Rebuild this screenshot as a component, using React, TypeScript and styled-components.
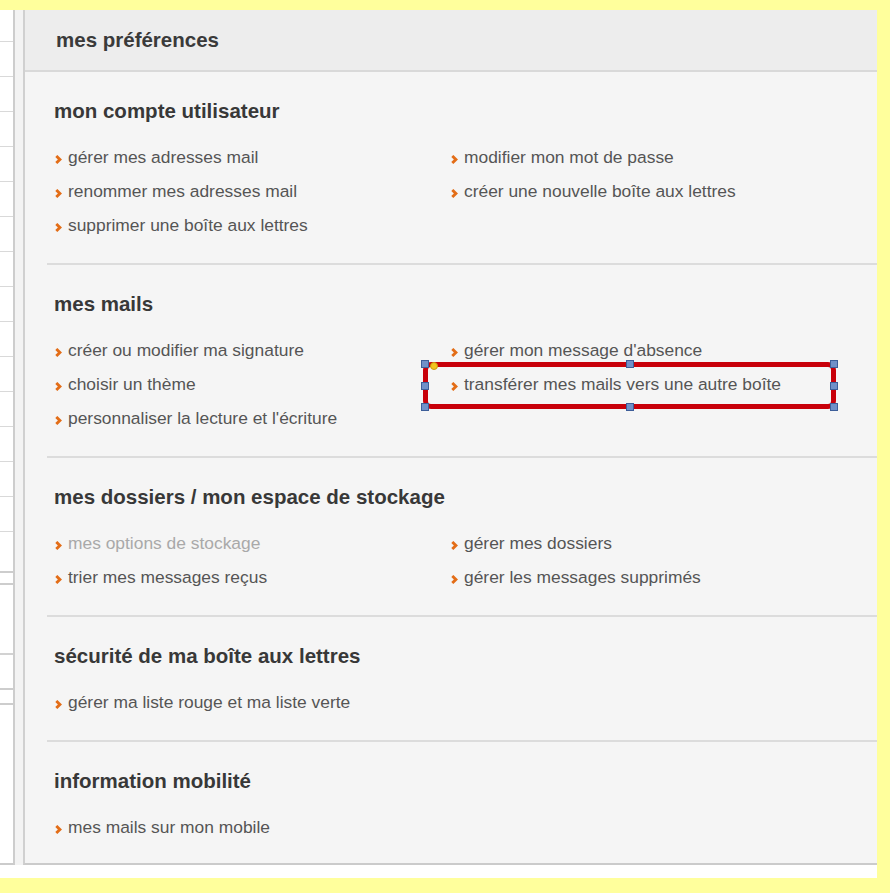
import styled, { createGlobalStyle } from "styled-components";

type LinkItem = { label: string; muted?: boolean };
type Section = { title: string; left: LinkItem[]; right: LinkItem[] };

const sections: Section[] = [
  {
    title: "mon compte utilisateur",
    left: [
      { label: "gérer mes adresses mail" },
      { label: "renommer mes adresses mail" },
      { label: "supprimer une boîte aux lettres" },
    ],
    right: [
      { label: "modifier mon mot de passe" },
      { label: "créer une nouvelle boîte aux lettres" },
    ],
  },
  {
    title: "mes mails",
    left: [
      { label: "créer ou modifier ma signature" },
      { label: "choisir un thème" },
      { label: "personnaliser la lecture et l'écriture" },
    ],
    right: [
      { label: "gérer mon message d'absence" },
      { label: "transférer mes mails vers une autre boîte" },
    ],
  },
  {
    title: "mes dossiers / mon espace de stockage",
    left: [
      { label: "mes options de stockage", muted: true },
      { label: "trier mes messages reçus" },
    ],
    right: [
      { label: "gérer mes dossiers" },
      { label: "gérer les messages supprimés" },
    ],
  },
  {
    title: "sécurité de ma boîte aux lettres",
    left: [{ label: "gérer ma liste rouge et ma liste verte" }],
    right: [],
  },
  {
    title: "information mobilité",
    left: [{ label: "mes mails sur mon mobile" }],
    right: [],
  },
];

// selection handles of the red annotation frame, in % of its box
const handles: [number, number][] = [
  [0, 0],
  [50, 0],
  [100, 0],
  [0, 50],
  [100, 50],
  [0, 100],
  [50, 100],
  [100, 100],
];

const Chevron = () => (
  <ChevronIcon width="7" height="9" viewBox="0 0 7 9">
    <polyline points="1.3,1 4.9,4.5 1.3,8" />
  </ChevronIcon>
);

const PrefLink = ({ item }: { item: LinkItem }) => (
  <LinkRow $muted={item.muted}>
    <Chevron />
    {item.label}
  </LinkRow>
);

const App = () => {
  const firstBoxRows = Array.from({ length: 15 });

  return (
    <>
      <GlobalStyle />
      <Page>
        <SideStrip>
          <StripBox $height={563} $first>
            {firstBoxRows.map((_, i) => (
              <StripRow key={i} $height={i === 0 ? 31 : 34} />
            ))}
          </StripBox>
          <StripBox $height={107}>
            <StripRow $height={68} $thick />
          </StripBox>
          <StripBox $grow />
        </SideStrip>
        <Gutter />
        <Main>
          <Header>mes préférences</Header>
          {sections.map((section) => (
            <SectionBlock key={section.title}>
              <SectionTitle>{section.title}</SectionTitle>
              <Columns>
                <Column>
                  {section.left.map((item) => (
                    <PrefLink key={item.label} item={item} />
                  ))}
                </Column>
                <Column>
                  {section.right.map((item) => (
                    <PrefLink key={item.label} item={item} />
                  ))}
                </Column>
              </Columns>
            </SectionBlock>
          ))}
        </Main>

        <Annotation>
          {handles.map(([x, y]) => (
            <Handle key={`${x}-${y}`} $x={x} $y={y} />
          ))}
          <AnchorDot />
        </Annotation>
      </Page>
    </>
  );
};

export default App;

const GlobalStyle = createGlobalStyle`
  html, body {
    margin: 0;
    padding: 0;
    background: #ffff9c;
  }
  body {
    font-family: "Liberation Sans", Arial, sans-serif;
  }
`;

const Page = styled.div`
  position: relative;
  margin-top: 10px;
  width: 877px;
  padding-bottom: 13px;
  background: #ffffff;
  display: flex;
  align-items: stretch;
`;

const SideStrip = styled.div`
  width: 13px;
  display: flex;
  flex-direction: column;
  gap: 10px;
  border-right: 2px solid #cdcdcd;
  border-bottom: 2px solid #cbcbcb;
`;

const StripBox = styled.div<{ $height?: number; $first?: boolean; $grow?: boolean }>`
  box-sizing: border-box;
  height: ${(p) => (p.$height ? `${p.$height}px` : "auto")};
  flex: ${(p) => (p.$grow ? 1 : "none")};
  overflow: hidden;
  background: #ffffff;
  border-top: ${(p) => (p.$first ? "none" : "2px solid #cdcdcd")};
  border-bottom: ${(p) => (p.$grow ? "none" : "2px solid #cdcdcd")};
  &:last-child {
    margin-top: 3px;
  }
`;

const StripRow = styled.div<{ $height: number; $thick?: boolean }>`
  height: ${(p) => p.$height}px;
  border-bottom: ${(p) => (p.$thick ? "2px solid #d2d2d2" : "1px solid #d9d9d9")};
`;

const Gutter = styled.div`
  width: 8px;
  background: #f3f3f3;
`;

const Main = styled.div`
  flex: 1;
  background: #f5f5f5;
  border-left: 2px solid #d0d0d0;
  border-bottom: 2px solid #cbcbcb;
`;

const Header = styled.div`
  height: 60px;
  display: flex;
  align-items: center;
  padding-left: 31px;
  background: #ededed;
  border-bottom: 2px solid #d9d9d9;
  font-size: 20.5px;
  font-weight: bold;
  color: #3a3a3a;
`;

const SectionBlock = styled.div`
  margin-left: 22px;
  padding: 27px 0 21px 7px;
  & + & {
    border-top: 2px solid #dcdcdc;
  }
  &:last-child {
    padding-bottom: 19px;
  }
`;

const SectionTitle = styled.div`
  font-size: 20.5px;
  line-height: 24px;
  font-weight: bold;
  color: #383838;
  margin-bottom: 17px;
`;

const Columns = styled.div`
  display: grid;
  grid-template-columns: 396px 1fr;
`;

const Column = styled.div`
  display: flex;
  flex-direction: column;
`;

const LinkRow = styled.div<{ $muted?: boolean }>`
  height: 34px;
  line-height: 34px;
  font-size: 17.4px;
  color: ${(p) => (p.$muted ? "#a9a9a9" : "#555555")};
  white-space: nowrap;
  cursor: pointer;
`;

const ChevronIcon = styled.svg`
  display: inline-block;
  vertical-align: -1px;
  margin-left: 1px;
  margin-right: 6px;
  fill: none;
  stroke: #e36d17;
  stroke-width: 2.9;
`;

const Annotation = styled.div`
  position: absolute;
  left: 423px;
  top: 352px;
  width: 413px;
  height: 47px;
  box-sizing: border-box;
  border: 5px solid #c8000a;
  border-radius: 8px;
`;

const Handle = styled.span<{ $x: number; $y: number }>`
  position: absolute;
  left: calc(${(p) => p.$x}% - 4px);
  top: calc(${(p) => p.$y}% - 4px);
  width: 6px;
  height: 6px;
  background: #7090c8;
  border: 1px solid #3d5e99;
  transform: translate(
    ${(p) => (p.$x === 0 ? "-3px" : p.$x === 100 ? "3px" : "0")},
    ${(p) => (p.$y === 0 ? "-3px" : p.$y === 100 ? "3px" : "0")}
  );
`;

const AnchorDot = styled.span`
  position: absolute;
  left: 2px;
  top: -5px;
  width: 6px;
  height: 6px;
  border-radius: 50%;
  background: #f2c41e;
  border: 1px solid #c99a10;
`;
